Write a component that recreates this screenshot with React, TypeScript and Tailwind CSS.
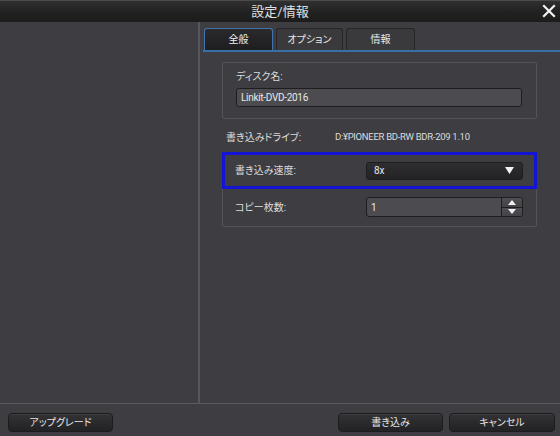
import React from "react";

const font = "font-['Roboto','Noto_Sans_CJK_JP',sans-serif] [font-feature-settings:'palt']";

function Btn({ children, w }: { children: React.ReactNode; w: string }) {
  return (
    <div
      className={`${w} h-[19px] rounded-[4px] border border-[#1c1c1e] bg-gradient-to-b from-[#333336] to-[#222224] flex items-center justify-center text-[10px] text-[#e6e6e6] shadow-[inset_0_1px_0_rgba(255,255,255,0.06)]`}
    >
      {children}
    </div>
  );
}

export default function App() {
  return (
    <div className={`w-[560px] h-[436px] bg-[#3d3d42] flex flex-col overflow-hidden ${font}`}>
      {/* Title bar */}
      <div className="h-[22px] shrink-0 bg-gradient-to-b from-[#303030] via-[#222222] to-[#1c1c1c] border-t border-[#4a4a4a] flex items-center justify-center relative">
        <span className="text-[13px] text-[#e0e0e0] leading-none">設定/情報</span>
        <svg className="absolute right-[4px] top-[3px]" width="14" height="14" viewBox="0 0 14 14">
          <path d="M2 2 L12 12 M12 2 L2 12" stroke="#f2f2f2" strokeWidth="2.2" strokeLinecap="square" />
        </svg>
      </div>

      {/* Middle */}
      <div className="flex-1 flex min-h-0">
        <div className="w-[200px] shrink-0 border-r-2 border-r-[#56565b]" />
        <div className="flex-1 flex flex-col pt-[6px]">
          {/* Tabs */}
          <div className="flex pl-[4px] gap-[3px] h-[22px]">
            <div className="w-[69px] h-[22px] rounded-t-[3px] border border-[#3f74ad] border-b-0 bg-gradient-to-b from-[#2a2a2c] to-[#1e1e20] flex items-center justify-center text-[10px] text-[#f0f0f0]">
              全般
            </div>
            <div className="w-[67px] h-[22px] rounded-t-[3px] border border-[#262628] border-b-0 bg-[#3a3a3d] flex items-center justify-center text-[10px] text-[#e8e8e8]">
              オプション
            </div>
            <div className="w-[69px] h-[22px] rounded-t-[3px] border border-[#262628] border-b-0 bg-[#3a3a3d] flex items-center justify-center text-[10px] text-[#e8e8e8]">
              情報
            </div>
          </div>
          <div className="ml-[3px] h-[2px] bg-[#3b6ea6]" />

          {/* Content */}
          <div className="pl-[22px] pt-[10px] w-[337px] flex flex-col">
            {/* Group 1 */}
            <div className="h-[57px] border border-[#535358] rounded-[2px] pl-[13px] pt-[6px] flex flex-col">
              <span className="text-[10px] text-[#dcdcdc] leading-[16px]">ディスク名:</span>
              <div className="mt-[3px] w-[286px] h-[19px] rounded-[3px] border border-[#1e1e20] bg-[#4b4b50] pl-[4px] flex items-center text-[10px] tracking-[-0.3px] text-[#e8e8e8]">
                Linkit-DVD-2016
              </div>
            </div>

            {/* Drive */}
            <div className="h-[16px] mt-[10px] flex items-center text-[10px] text-[#dcdcdc]">
              <span className="pl-[4px] w-[113px]">書き込みドライブ:</span>
              <span className="text-[9.5px] tracking-[-0.3px]">D:¥PIONEER BD-RW BDR-209 1.10</span>
            </div>

            {/* Group 2 */}
            <div className="mt-[7px] h-[75px] border border-[#535358] rounded-[2px] flex flex-col">
              <div className="-mx-px -mt-px h-[37px] border-[3px] border-[#1414d4] flex items-center">
                <span className="pl-[10px] w-[141px] text-[10px] text-[#dcdcdc]">書き込み速度:</span>
                <div className="w-[157px] h-[18px] rounded-[3px] border border-[#1e1e20] bg-gradient-to-b from-[#2e2e31] to-[#232326] flex items-center justify-between pl-[7px] pr-[8px] text-[10px] text-[#e8e8e8]">
                  <span>8x</span>
                  <svg width="9" height="7" viewBox="0 0 9 7">
                    <path d="M0 0 H9 L4.5 7 Z" fill="#f2f2f2" />
                  </svg>
                </div>
              </div>
              <div className="h-[36px] flex items-center">
                <span className="pl-[12px] w-[143px] text-[10px] text-[#dcdcdc]">コピー枚数:</span>
                <div className="w-[157px] h-[20px] rounded-[3px] border border-[#1e1e20] bg-[#4b4b50] flex text-[10px] text-[#e8e8e8]">
                  <div className="flex-1 pl-[4px] flex items-center">1</div>
                  <div className="w-[21px] flex flex-col border-l border-[#1e1e20]">
                    <div className="flex-1 flex items-center justify-center bg-gradient-to-b from-[#4e4e53] to-[#434347] border-b border-[#1e1e20] rounded-tr-[2px]">
                      <svg width="8" height="5" viewBox="0 0 8 5">
                        <path d="M0 5 H8 L4 0 Z" fill="#f0f0f0" />
                      </svg>
                    </div>
                    <div className="flex-1 flex items-center justify-center bg-gradient-to-b from-[#4e4e53] to-[#434347] rounded-br-[2px]">
                      <svg width="8" height="5" viewBox="0 0 8 5">
                        <path d="M0 0 H8 L4 5 Z" fill="#f0f0f0" />
                      </svg>
                    </div>
                  </div>
                </div>
              </div>
            </div>
          </div>
        </div>
      </div>

      {/* Bottom bar */}
      <div className="h-[33px] shrink-0 border-t border-[#5a5a5f] flex items-center pl-[8px] pr-[5px] pt-[4px]">
        <Btn w="w-[105px]">アップグレード</Btn>
        <div className="flex-1" />
        <Btn w="w-[105px]">書き込み</Btn>
        <div className="w-[6px]" />
        <Btn w="w-[106px]">キャンセル</Btn>
      </div>
    </div>
  );
}
